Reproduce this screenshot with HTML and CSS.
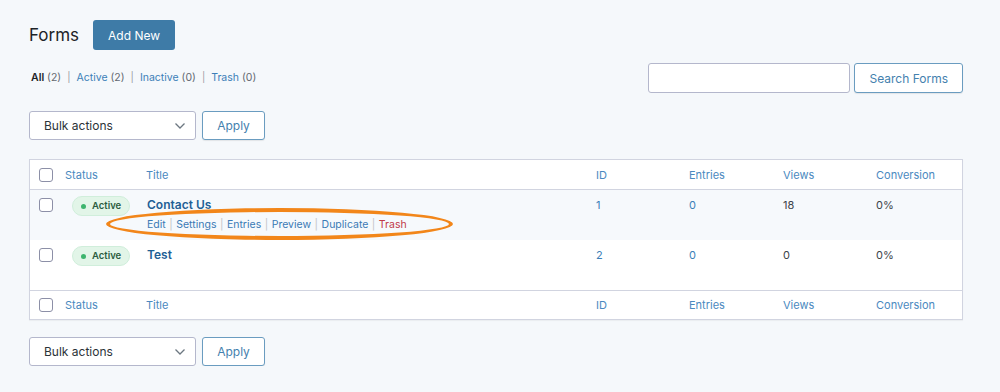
FILE: index.html
```html
<!DOCTYPE html>
<html>
<head>
	<meta charset="utf-8">
	<title>Forms</title>
	<link rel="stylesheet" href="styles.css">
</head>
<body>
	<div class="f-wrap">
		<div class="f-head">
			<h1 class="f-title">Forms</h1>
			<a class="f-btn-primary" href="#">Add New</a>
		</div>

		<div class="f-toolbar">
			<ul class="f-subsubsub">
				<li><b>All</b> <span class="f-count">(2)</span></li>
				<li class="f-sep">|</li>
				<li><a href="#">Active</a> <span class="f-count">(2)</span></li>
				<li class="f-sep">|</li>
				<li><a href="#">Inactive</a> <span class="f-count">(0)</span></li>
				<li class="f-sep">|</li>
				<li><a href="#">Trash</a> <span class="f-count">(0)</span></li>
			</ul>
			<div class="f-search">
				<input type="text" class="f-input">
				<button class="f-btn">Search Forms</button>
			</div>
		</div>

		<div class="f-bulk">
			<div class="f-select">Bulk actions
				<svg width="12" height="8" viewBox="0 0 12 8"><path d="M1.5 1.5 L6 6 L10.5 1.5" fill="none" stroke="#6c7781" stroke-width="1.3"/></svg>
			</div>
			<button class="f-btn f-apply">Apply</button>
		</div>

		<div class="f-table">
			<div class="f-row f-row-head">
				<div class="f-cell"><span class="f-check"></span></div>
				<div class="f-cell"><a href="#">Status</a></div>
				<div class="f-cell"><a href="#">Title</a></div>
				<div class="f-cell"><a href="#">ID</a></div>
				<div class="f-cell"><a href="#">Entries</a></div>
				<div class="f-cell"><a href="#">Views</a></div>
				<div class="f-cell"><a href="#">Conversion</a></div>
			</div>
			<div class="f-row f-row-body f-row-hover">
				<div class="f-cell"><span class="f-check"></span></div>
				<div class="f-cell"><span class="f-badge"><i></i>Active</span></div>
				<div class="f-cell f-title-cell">
					<a class="f-form-name" href="#">Contact Us</a>
					<div class="f-actions">
						<a href="#">Edit</a><span>|</span><a href="#">Settings</a><span>|</span><a href="#">Entries</a><span>|</span><a href="#">Preview</a><span>|</span><a href="#">Duplicate</a><span>|</span><a href="#" class="f-trash">Trash</a>
					</div>
					<div class="f-mark"></div>
				</div>
				<div class="f-cell"><a href="#">1</a></div>
				<div class="f-cell"><a href="#">0</a></div>
				<div class="f-cell">18</div>
				<div class="f-cell">0%</div>
			</div>
			<div class="f-row f-row-body">
				<div class="f-cell"><span class="f-check"></span></div>
				<div class="f-cell"><span class="f-badge"><i></i>Active</span></div>
				<div class="f-cell f-title-cell">
					<a class="f-form-name" href="#">Test</a>
				</div>
				<div class="f-cell"><a href="#">2</a></div>
				<div class="f-cell"><a href="#">0</a></div>
				<div class="f-cell">0</div>
				<div class="f-cell">0%</div>
			</div>
			<div class="f-row f-row-foot">
				<div class="f-cell"><span class="f-check"></span></div>
				<div class="f-cell"><a href="#">Status</a></div>
				<div class="f-cell"><a href="#">Title</a></div>
				<div class="f-cell"><a href="#">ID</a></div>
				<div class="f-cell"><a href="#">Entries</a></div>
				<div class="f-cell"><a href="#">Views</a></div>
				<div class="f-cell"><a href="#">Conversion</a></div>
			</div>
		</div>

		<div class="f-bulk f-bulk-bottom">
			<div class="f-select">Bulk actions
				<svg width="12" height="8" viewBox="0 0 12 8"><path d="M1.5 1.5 L6 6 L10.5 1.5" fill="none" stroke="#6c7781" stroke-width="1.3"/></svg>
			</div>
			<button class="f-btn f-apply">Apply</button>
		</div>
	</div>
</body>
</html>
```

FILE: styles.css
```css
body {
	margin: 0;
	background-color: #f5f8fb;
	font-family: 'Inter', 'Noto Sans', sans-serif;
	font-size: 11px;
	color: #3c434a;
}

a {
	color: #3c7fb8;
	text-decoration: none;
}

.f-wrap {
	padding: 20px 37px 0 29px;
}

/*Heading*/

.f-head {
	display: flex;
	align-items: center;
	height: 30px;
}

.f-title {
	margin: 0 14px 0 0;
	font-size: 17px;
	font-weight: 400;
	color: #1d2327;
}

.f-btn-primary {
	display: flex;
	align-items: center;
	justify-content: center;
	width: 82px;
	height: 30px;
	box-sizing: border-box;
	border-radius: 3px;
	background-color: #3e7ba7;
	color: white;
	font-size: 12px;
	font-weight: 400;
}

/*Toolbar*/

.f-toolbar {
	display: flex;
	align-items: center;
	justify-content: space-between;
	margin-top: 13px;
	height: 30px;
}

.f-subsubsub {
	display: flex;
	list-style: none;
	margin: 0 0 1px 2px;
	padding: 0;
	font-size: 10.5px;
	color: #50575e;
}

.f-subsubsub b {
	color: #1d2327;
	font-weight: 600;
}

.f-subsubsub .f-sep {
	margin: 0 6px;
	color: #9a9da2;
	font-size: 10px;
}

.f-count {
	color: #646970;
}

.f-search {
	display: flex;
	gap: 4px;
}

.f-input {
	width: 202px;
	height: 30px;
	box-sizing: border-box;
	border: 1px solid #b4b7cc;
	border-radius: 3px;
	background: white;
	margin: 0;
}

.f-btn {
	height: 30px;
	box-sizing: border-box;
	border: 1px solid #6a9cc0;
	border-radius: 3px;
	background-color: white;
	color: #4481ae;
	font-family: inherit;
	font-size: 12px;
	font-weight: 400;
	padding: 0 14px;
	box-shadow: 0 1px 1px rgba(0, 0, 0, 0.08);
}

/*Bulk actions*/

.f-bulk {
	display: flex;
	gap: 6px;
	margin-top: 18px;
}

.f-select {
	display: flex;
	align-items: center;
	justify-content: space-between;
	width: 167px;
	height: 29px;
	box-sizing: border-box;
	padding: 0 9px 0 14px;
	border: 1px solid #b4b7cc;
	border-radius: 3px;
	background: white;
	color: #2c3338;
	font-size: 12px;
}

.f-apply {
	height: 29px;
	width: 63px;
	padding: 0;
}

.f-bulk-bottom {
	margin-top: 17px;
}

/*Table*/

.f-table {
	margin-top: 19px;
	border: 1px solid #d1d4e0;
	background-color: white;
	box-shadow: 0 1px 1px rgba(0, 0, 0, 0.04);
}

.f-row {
	display: grid;
	grid-template-columns: 35px 81px 450px 93px 94px 93px 86px;
}

.f-row-head {
	height: 29px;
	align-items: center;
	border-bottom: 1px solid #d1d4e0;
}

.f-row-foot {
	height: 28px;
	align-items: center;
	border-top: 1px solid #d1d4e0;
}

.f-row-head a,
.f-row-foot a {
	color: #4a89c0;
}

.f-row-body {
	height: 50px;
	box-sizing: border-box;
	padding-top: 8px;
	color: #3c434a;
}

.f-row-hover {
	background-color: #f6f9fc;
}

.f-row-body .f-cell {
	line-height: 14px;
}

.f-cell:first-child {
	padding-left: 9px;
}

.f-row-head .f-cell:first-child,
.f-row-foot .f-cell:first-child {
	display: flex;
	align-items: center;
}

.f-check {
	display: block;
	width: 14px;
	height: 14px;
	box-sizing: border-box;
	border: 1px solid #8c8fa7;
	border-radius: 3px;
	background: white;
}

.f-badge {
	display: inline-flex;
	align-items: center;
	margin: 0 0 0 7px;
	height: 20px;
	padding: 0 8px 0 8px;
	border-radius: 10px;
	background-color: #e2f5e8;
	border: 1px solid #d0eedb;
	box-sizing: border-box;
	color: #2b5c40;
	font-size: 9.5px;
	font-weight: 600;
	position: relative;
	top: -2px;
}

.f-badge i {
	display: block;
	width: 5px;
	height: 5px;
	border-radius: 50%;
	background-color: #3db46d;
	margin-right: 6px;
}

.f-title-cell {
	position: relative;
	padding-left: 1px;
}

.f-form-name {
	display: block;
	font-size: 12px;
	font-weight: 600;
	color: #1f5f95;
	margin-top: 0;
}

.f-actions {
	margin-top: 6px;
	white-space: nowrap;
	font-size: 10.5px;
}

.f-actions a {
	color: #3b7ab5;
}

.f-actions span {
	margin: 0 3.5px;
	color: #c3c4c7;
}

.f-actions .f-trash {
	color: #c13a48;
}

.f-mark {
	position: absolute;
	left: -40px;
	top: 10px;
	width: 347px;
	height: 32px;
	box-sizing: border-box;
	border: 4px solid #f2861a;
	border-radius: 50%;
}
```
